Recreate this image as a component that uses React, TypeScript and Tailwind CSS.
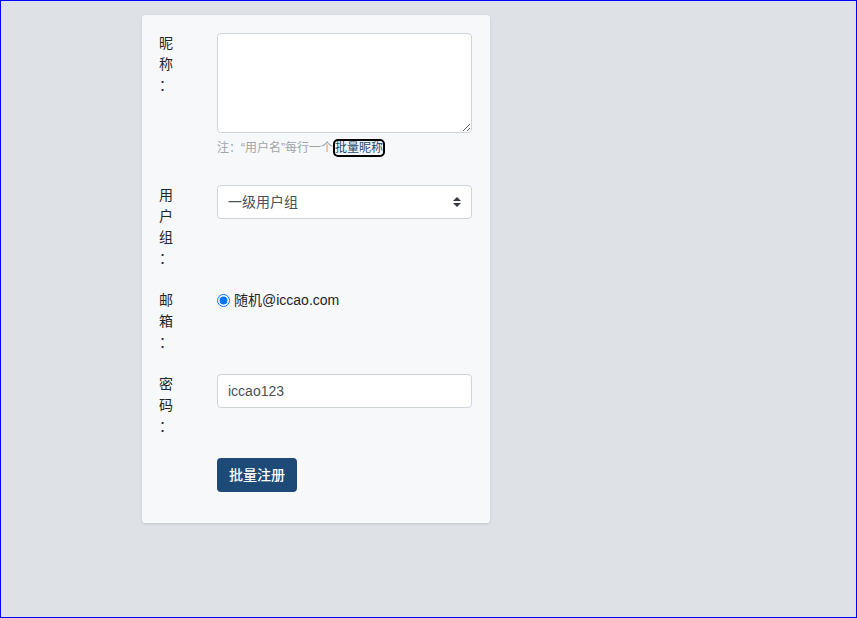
import { useState } from 'react';

const cjk = { fontFamily: '"Liberation Sans", "Noto Sans CJK SC", sans-serif' };

function Label({ text }: { text: string }) {
  // the label column is narrow, so every character sits on its own line
  return (
    <label className="w-[15px] shrink-0 text-[14px] leading-[21px] text-[#212529]">
      {text.split('').map((ch, i) => (
        <span key={i} className="block">
          {ch}
        </span>
      ))}
    </label>
  );
}

export default function App() {
  const [group, setGroup] = useState('1');

  return (
    <div className="h-[618px] border border-[#0000ff] bg-[#dee1e5]" style={cjk}>
      <div className="ml-[141px] mt-[14px] w-[348px] rounded-[3px] bg-[#f7f8fa] pl-[17px] pr-[18px] pt-[18px] pb-[31px] shadow-[0_1px_3px_rgba(0,0,0,0.12)]">
        {/* 昵称 */}
        <div className="flex mb-[21px]">
          <Label text="昵称：" />
          <div className="ml-[43px] flex-1">
            <textarea className="block h-[100px] w-full rounded-[4px] border border-[#ced4da] bg-white px-3 py-1.5 text-[14px] outline-none" />
            <div className="mt-[6px] pb-[7px] text-[12px] leading-[18px] text-[#a0a4a8]">
              注：“用户名”每行一个
              <a
                href="#"
                className="ml-[2px] rounded-[3px] text-[#1e4a78] outline outline-2 outline-black"
                onClick={(e) => e.preventDefault()}
              >
                批量昵称
              </a>
            </div>
          </div>
        </div>

        {/* 用户组 */}
        <div className="flex mb-[21px]">
          <Label text="用户组：" />
          <div className="ml-[43px] flex-1">
            <div className="relative">
              <select
                value={group}
                onChange={(e) => setGroup(e.target.value)}
                className="block h-[34px] w-full appearance-none rounded-[4px] border border-[#ced4da] bg-white pl-[10px] pr-8 text-[14px] text-[#495057] outline-none"
                style={cjk}
              >
                <option value="1">一级用户组</option>
                <option value="2">二级用户组</option>
              </select>
              <svg
                className="pointer-events-none absolute right-[11px] top-[12px]"
                width="8"
                height="10"
                viewBox="0 0 4 5"
              >
                <path d="M2 0L0 2h4zm0 5L0 3h4z" fill="#343a40" />
              </svg>
            </div>
          </div>
        </div>

        {/* 邮箱 */}
        <div className="flex mb-[21px]">
          <Label text="邮箱：" />
          <div className="ml-[43px] flex-1">
            <label className="flex items-center text-[14px] leading-[21px] text-[#212529]">
              <input type="radio" defaultChecked className="m-0 mr-[4px] h-[13px] w-[13px]" />
              随机@iccao.com
            </label>
          </div>
        </div>

        {/* 密码 */}
        <div className="flex mb-[21px]">
          <Label text="密码：" />
          <div className="ml-[43px] flex-1">
            <input
              type="text"
              defaultValue="iccao123"
              className="block h-[34px] w-full rounded-[4px] border border-[#ced4da] bg-white px-[10px] text-[14px] text-[#495057] outline-none"
              style={cjk}
            />
          </div>
        </div>

        {/* 提交 */}
        <div className="flex">
          <div className="w-[58px] shrink-0" />
          <button className="h-[34px] rounded-[4px] bg-[#1e4a78] px-[12px] text-[14px] font-medium text-white">
            批量注册
          </button>
        </div>
      </div>
    </div>
  );
}
